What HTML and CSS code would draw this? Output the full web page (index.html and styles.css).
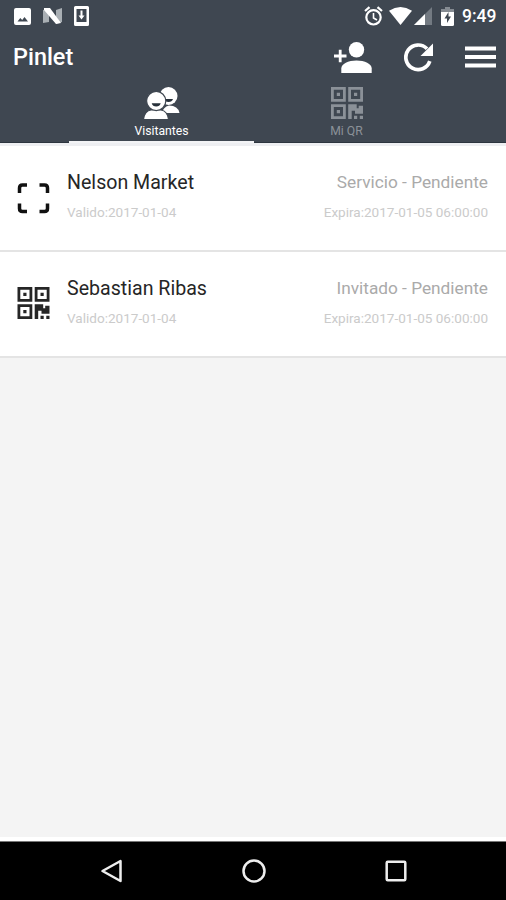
FILE: index.html
```html
<!DOCTYPE html>
<html lang="es">
<head>
    <meta charset="UTF-8">
    <meta name="viewport" content="width=device-width, initial-scale=1.0">
    <title>Pinlet</title>
    <link rel="stylesheet" href="styles.css">
</head>
<body>
    <!-- Shared QR icon -->
    <svg class="defs" width="0" height="0">
        <symbol id="qr" viewBox="0 0 32 32">
            <path fill="none" stroke="currentColor" stroke-width="2.800" d="M1.400 1.400h12v12h-12zM18.600 1.400h12v12h-12zM1.400 18.600h12v12h-12z"/>
            <path fill="currentColor" d="M5.800 5.800h3.200v3.200h-3.200zM23 5.800h3.200v3.200h-3.200zM5.800 23h3.200v3.200h-3.200zM17.200 17.200h8.500v4h2v-2.500h4.300v8h-8v-3h-3.300v8.300h-3.500zM23 28.800h3.200v3.200h-3.200zM28.800 28.800h3.200v3.200h-3.200z"/>
        </symbol>
    </svg>

    <header class="header">
        <div class="status-bar">
            <svg class="icon-image" width="17" height="17" viewBox="0 0 17 17">
                <path fill="#fff" fill-rule="evenodd" d="M2 0h13q2 0 2 2v13q0 2-2 2h-13q-2 0-2-2v-13q0-2 2-2zM3.500 13.500h10.500l-3.500-4.500-2.300 3-1.900-2z"/>
            </svg>
            <svg class="icon-n" width="19" height="16" viewBox="0 0 19 16">
                <path fill="#a9afb4" d="M0 2l6-1v13l-6 1zM13 2l6-2v14l-6 2z"/>
                <path fill="#fff" d="M1 0h6l11 15-5 1L1 2z"/>
            </svg>
            <svg class="icon-phone" width="15" height="20" viewBox="0 0 15 20">
                <path fill="#fff" fill-rule="evenodd" d="M1.500 0h12q1.500 0 1.500 1.500v17q0 1.500-1.500 1.500h-12q-1.500 0-1.500-1.500v-17q0-1.500 1.500-1.500zM2.500 3v13h10v-13z"/>
                <path fill="#fff" d="M6.500 4.500h2v5h2l-3 4-3-4h2z"/>
            </svg>
            <div class="status-right">
                <svg width="19" height="20" viewBox="0 0 19 20">
                    <g fill="none" stroke="#fff" stroke-width="2.200">
                        <circle cx="9.500" cy="11.300" r="7.200"/>
                        <path d="M1 5l4.500-3.800M18 5l-4.500-3.800"/>
                        <path stroke-width="1.600" d="M9.500 7v5l3.500 2"/>
                    </g>
                </svg>
                <svg class="icon-wifi" width="23" height="18" viewBox="0 0 23 18">
                    <path fill="#fff" d="M11.500 18L0 3.700q11.500-7.400 23 0z"/>
                </svg>
                <svg class="icon-signal" width="18" height="18" viewBox="0 0 18 18">
                    <path fill="#737a82" d="M0 18L18 0v18z"/>
                    <path fill="#fff" d="M0 18L11 7v11z"/>
                </svg>
                <svg class="icon-battery" width="13" height="19" viewBox="0 0 13 19">
                    <path fill="#858b92" d="M4 0h5v2h4v4h-13v-4h4z"/>
                    <path fill="#fff" d="M0 5h13v12.500q0 1.500-1.500 1.500h-10q-1.500 0-1.500-1.500z"/>
                    <path fill="#3f4751" d="M7.500 5l-4 6.500h2.500v4.500l4-6.500h-2.500z"/>
                </svg>
                <span class="clock">9:49</span>
            </div>
        </div>

        <div class="toolbar">
            <h1 class="title">Pinlet</h1>
            <div class="actions">
                <svg width="38" height="31" viewBox="0 0 38 31">
                    <circle cx="22.500" cy="7.700" r="7.700" fill="#fff"/>
                    <path fill="#fff" d="M7.300 31v-4.500c0-4.500 7-8 15.200-8s15.200 3.500 15.200 8v4.500z"/>
                    <path fill="none" stroke="#fff" stroke-width="2.800" d="M0 14h12.500M6.200 7.700v12.600"/>
                </svg>
                <svg class="icon-refresh" width="29" height="29" viewBox="0 0 29 29">
                    <path fill="none" stroke="#fff" stroke-width="3.700" d="M25.800 18.200A12.300 12.300 0 1 1 23 5.800"/>
                    <path fill="#fff" d="M29 .5v12.500h-12.500z"/>
                </svg>
                <svg class="icon-menu" width="31" height="22" viewBox="0 0 31 22">
                    <path fill="#fff" d="M0 .5h31v4h-31zM0 9h31v4h-31zM0 17.500h31v4h-31z"/>
                </svg>
            </div>
        </div>

        <nav class="tabs">
            <a class="tab active">
                <svg width="36" height="32" viewBox="0 0 36 32">
                    <g fill="#fff">
                        <path d="M18 26q1-6 7-7.500 9 0 10.500 7.500z"/>
                        <circle cx="24.500" cy="9" r="9"/>
                    </g>
                    <path fill="#27303a" d="M20.500 12h8.500q-1 3-4.500 3t-4-3z"/>
                    <!-- front person, outlined to separate it from the one behind -->
                    <g fill="#fff" stroke="#3f4751" stroke-width="1.200">
                        <path d="M-.5 32.600q1-8.600 7.500-9.600h10q6.500 1 7.500 9.600z"/>
                        <circle cx="12.200" cy="14" r="9.600"/>
                    </g>
                    <path fill="#27303a" d="M7.700 16.300h9q-1 3.300-4.500 3.300t-4.500-3.300z"/>
                </svg>
                <span>Visitantes</span>
            </a>
            <a class="tab">
                <svg width="32" height="32"><use href="#qr"/></svg>
                <span>Mi QR</span>
            </a>
        </nav>
    </header>

    <main class="list">
        <div class="item">
            <svg class="item-icon" width="33" height="32" viewBox="0 0 33 32">
                <path fill="none" stroke="#111" stroke-width="3.500" d="M2.500 10V5q0-3 3-3h4.500M22.500 2h5q3 0 3 3v5M30.500 20.500v5q0 3-3 3h-5M10 28.500H5.500q-3 0-3-3V20.500"/>
            </svg>
            <div class="info">
                <div class="name">Nelson Market</div>
                <div class="date">Valido:2017-01-04</div>
            </div>
            <div class="info right">
                <div class="type">Servicio - Pendiente</div>
                <div class="date">Expira:2017-01-05 06:00:00</div>
            </div>
        </div>
        <div class="item">
            <svg class="item-icon qr" width="33" height="32"><use href="#qr"/></svg>
            <div class="info">
                <div class="name">Sebastian Ribas</div>
                <div class="date">Valido:2017-01-04</div>
            </div>
            <div class="info right">
                <div class="type">Invitado - Pendiente</div>
                <div class="date">Expira:2017-01-05 06:00:00</div>
            </div>
        </div>
    </main>

    <footer class="nav-bar">
        <svg width="24" height="26" viewBox="0 0 24 26">
            <path fill="none" stroke="#eee" stroke-width="2.500" stroke-linejoin="round" d="M20.500 3v20L2.500 13z"/>
        </svg>
        <svg width="26" height="26" viewBox="0 0 26 26">
            <circle cx="13" cy="13" r="10.500" fill="none" stroke="#eee" stroke-width="2.500"/>
        </svg>
        <svg width="24" height="26" viewBox="0 0 24 26">
            <rect x="2.700" y="3.700" width="18.600" height="18.600" rx="1" fill="none" stroke="#eee" stroke-width="2.500"/>
        </svg>
    </footer>
</body>
</html>
```
FILE: styles.css
```css
* {
    box-sizing: border-box;
}
body {
    margin: 0;
    height: 900px;
    display: flex;
    flex-direction: column;
    overflow: hidden;
    font-family: Roboto, sans-serif;
    background-color: #f4f4f4;
}
svg {
    display: block;
    flex-shrink: 0;
}
.defs {
    position: absolute;
}
.header {
    height: 146px;
    background-color: #3f4751;
    border-bottom: 3px solid #eeeff2;
    color: white;
}
.status-bar {
    display: flex;
    align-items: center;
    height: 32px;
    padding: 0 9px 0 14px;
}
.icon-n {
    margin-left: 12px;
}
.icon-phone {
    margin-left: 12px;
}
.status-right {
    display: flex;
    align-items: center;
    margin-left: auto;
}
.icon-wifi {
    margin-left: 6px;
}
.icon-signal {
    margin-left: 2px;
}
.icon-battery {
    margin-left: 9px;
}
.clock {
    width: 35px;
    margin-left: 8px;
    font-size: 17.5px;
    font-weight: 500;
    line-height: 32px;
}
.toolbar {
    display: flex;
    justify-content: space-between;
    align-items: center;
    height: 50px;
    padding: 0 10px 0 13px;
}
.title {
    margin: 0;
    font-size: 23.4px;
    font-weight: 500;
}
.actions {
    display: flex;
    align-items: center;
}
.icon-refresh {
    margin-left: 32px;
}
.icon-menu {
    margin-left: 32px;
}
.tabs {
    display: flex;
    justify-content: center;
    height: 61px;
    padding-left: 2px;
    border-bottom: 1px solid #2d353f;
}
.tab {
    display: flex;
    flex-direction: column;
    align-items: center;
    width: 185px;
    height: 61px;
    padding-top: 5px;
    border-bottom: 2px solid transparent;
    font-size: 12.2px;
    line-height: 14px;
    color: #8b9198;
}
.tab span {
    margin-top: 5px;
}
.tab.active {
    color: white;
    border-bottom-color: #f3f4f6;
}
.list {
    flex: 1;
}
.item {
    display: flex;
    height: 106px;
    padding: 0 18px 0 17px;
    background-color: white;
    border-bottom: 2px solid #e4e4e4;
    color: #262626;
}
.item-icon {
    margin-top: 37px;
}
.item-icon.qr {
    margin-top: 35px;
}
.info {
    margin-left: 17px;
    padding-top: 23px;
}
.info.right {
    margin-left: auto;
    text-align: right;
}
.name {
    padding-top: 1px;
    font-size: 19.6px;
    line-height: 25px;
}
.type {
    font-size: 17.25px;
    line-height: 26px;
    color: #aaa;
}
.date {
    margin-top: 9px;
    font-size: 13.55px;
    line-height: 17px;
    color: #cbcbcb;
}
.nav-bar {
    display: flex;
    justify-content: space-between;
    align-items: center;
    height: 63px;
    padding: 0 98px 0 100px;
    background-color: black;
    border-top: 4px solid white;
    box-shadow: inset 0 1px #777;
}
```
